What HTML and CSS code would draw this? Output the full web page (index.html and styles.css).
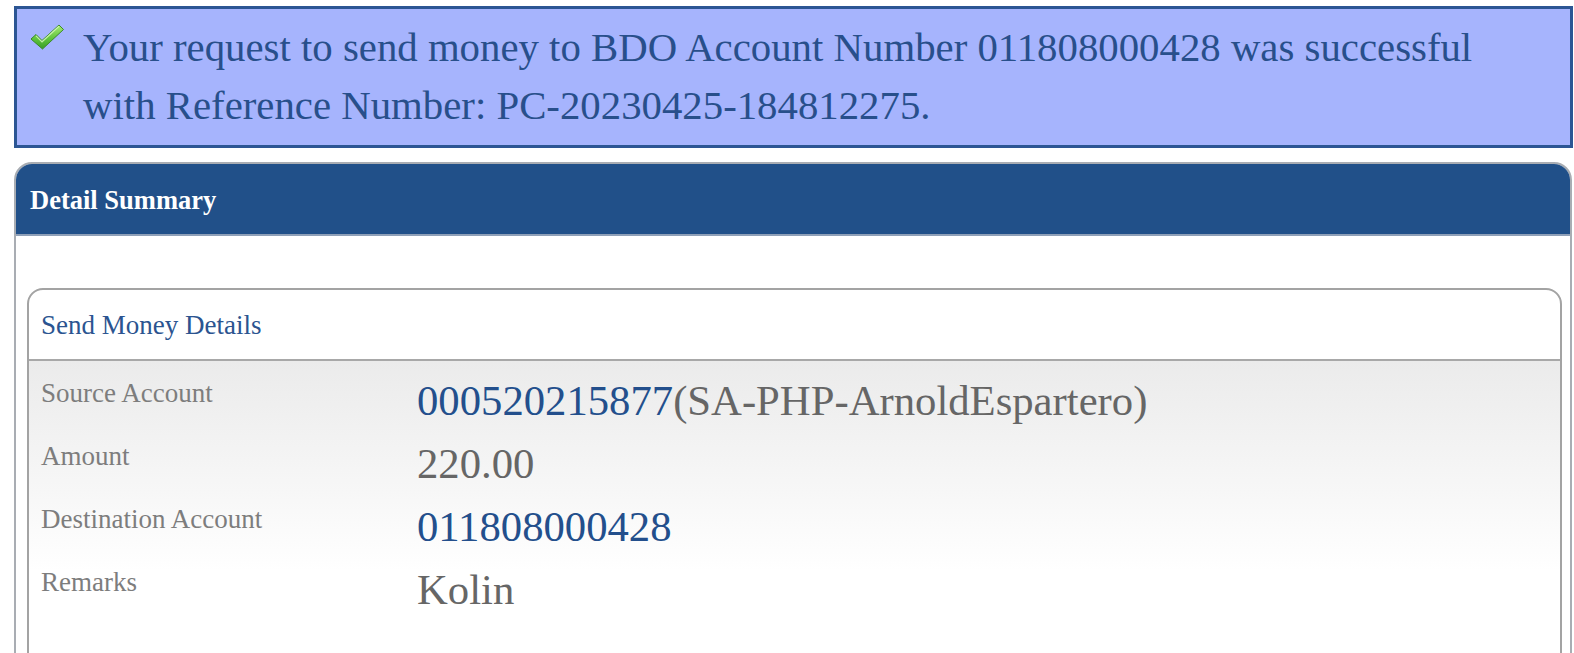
FILE: index.html
```html
<!DOCTYPE html>
<html>
<head>
<meta charset="utf-8">
<link rel="stylesheet" href="styles.css">
</head>
<body>
<div class="page">
  <div class="notice">
    <div class="notice-icon">
      <svg width="36" height="28" viewBox="0 0 36 28">
        <defs>
          <linearGradient id="g" x1="0" y1="0" x2="0" y2="1">
            <stop offset="0" stop-color="#a6ea74"/>
            <stop offset="0.6" stop-color="#5cc23a"/>
            <stop offset="1" stop-color="#3a9c26"/>
          </linearGradient>
        </defs>
        <path d="M2 16 L7 11.5 L13 17.5 L30 2 L34.5 6.5 L13.5 26 Z" fill="url(#g)" stroke="#3a8a28" stroke-width="1" stroke-linejoin="round"/>
        <path d="M7 12.8 L13 18.8 L30 3.3" fill="none" stroke="#d4f7b8" stroke-width="1.2" opacity="0.85"/>
      </svg>
    </div>
    <p class="notice-text">Your request to send money to BDO Account Number 011808000428 was successful with Reference Number: PC-20230425-184812275.</p>
  </div>

  <section class="panel">
    <header class="panel-head">Detail Summary</header>
    <div class="panel-body">
      <div class="box">
        <div class="box-head">Send Money Details</div>
        <div class="rows">
          <div class="row">
            <div class="label">Source Account</div>
            <div class="value"><span class="acct">000520215877</span>(SA-PHP-ArnoldEspartero)</div>
          </div>
          <div class="row">
            <div class="label">Amount</div>
            <div class="value">220.00</div>
          </div>
          <div class="row">
            <div class="label">Destination Account</div>
            <div class="value"><span class="acct">011808000428</span></div>
          </div>
          <div class="row">
            <div class="label">Remarks</div>
            <div class="value">Kolin</div>
          </div>
          <div class="row spacer"></div>
        </div>
      </div>
    </div>
  </section>
</div>
</body>
</html>
```

FILE: styles.css
```css
html, body {
  margin: 0;
  padding: 0;
  overflow: hidden;
  background: #ffffff;
}

body {
  font-family: "Liberation Serif", "Times New Roman", serif;
}

.page {
  padding: 6px 1px 0 14px;
}

.notice {
  display: flex;
  align-items: flex-start;
  background: #a6b4fd;
  border: 3px solid #2c5694;
  padding: 10px 60px 10px 0;
}

.notice-icon {
  width: 66px;
  flex: none;
  padding: 4px 0 0 12px;
  box-sizing: border-box;
}

.notice-icon svg {
  display: block;
}

.notice-text {
  margin: 0;
  font-size: 40.8px;
  line-height: 58px;
  color: #284f8b;
}

.panel {
  margin: 14px 1px 0 0;
  border: 2px solid #a9adb3;
  border-radius: 18px 18px 0 0;
  overflow: hidden;
  height: 600px;
}

.panel-head {
  height: 72px;
  background: #215089;
  color: #ffffff;
  font-weight: bold;
  font-size: 26.5px;
  display: flex;
  align-items: center;
  padding: 3px 0 0 14px;
  box-sizing: border-box;
  border-bottom: 2px solid #8fa0b8;
}

.panel-body {
  padding: 52px 8px 0 11px;
}

.box {
  border: 2px solid #a3a3a3;
  border-radius: 16px 16px 0 0;
  overflow: hidden;
}

.box-head {
  display: flex;
  align-items: center;
  padding: 2px 0 0 12px;
  font-size: 27px;
  color: #2b5490;
  border-bottom: 2px solid #a8a8a8;
  box-sizing: border-box;
  height: 71px;
}

.rows {
  background: linear-gradient(#ebebeb 0px, #f6f6f6 120px, #ffffff 210px);
}

.row {
  display: grid;
  grid-template-columns: 376px 1fr;
  height: 63px;
  padding-left: 12px;
}

.row.spacer {
  height: 120px;
}

.label {
  font-size: 27px;
  line-height: 30px;
  padding-top: 17px;
  color: #7d7d7d;
}

.value {
  font-size: 42.7px;
  line-height: 42px;
  padding-top: 19px;
  color: #666666;
}

.acct {
  color: #234f8c;
}
```
